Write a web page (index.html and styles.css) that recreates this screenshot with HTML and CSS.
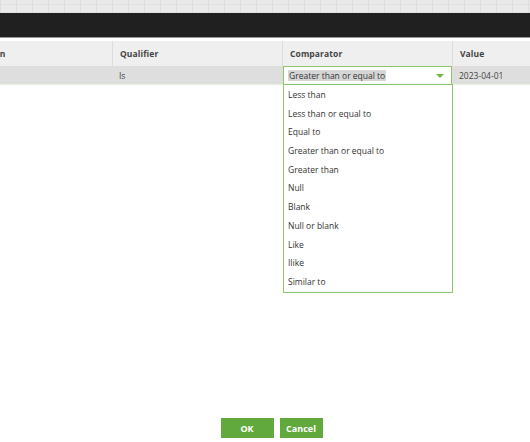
FILE: index.html
```html
<!DOCTYPE html>
<html>
<head>
<meta charset="utf-8">
<link rel="stylesheet" href="styles.css">
</head>
<body>
<div class="page">
  <div class="topstrip"></div>
  <div class="darkbar"></div>
  <div class="content">
    <div class="grid">
      <div class="hcell first">Column</div>
      <div class="hcell">Qualifier</div>
      <div class="hcell">Comparator</div>
      <div class="hcell">Value</div>
      <div class="dcell first"></div>
      <div class="dcell">Is</div>
      <div class="dcell selcell">
        <div class="select">
          <span class="seltext">Greater than or equal to</span>
          <span class="arrow"></span>
        </div>
        <ul class="menu">
          <li>Less than</li>
          <li>Less than or equal to</li>
          <li>Equal to</li>
          <li>Greater than or equal to</li>
          <li>Greater than</li>
          <li>Null</li>
          <li>Blank</li>
          <li>Null or blank</li>
          <li>Like</li>
          <li>Ilike</li>
          <li>Similar to</li>
        </ul>
      </div>
      <div class="dcell">2023-04-01</div>
    </div>
    <div class="spacer"></div>
    <div class="buttons">
      <button class="btn ok">OK</button>
      <button class="btn cancel">Cancel</button>
    </div>
  </div>
</div>
</body>
</html>
```
FILE: styles.css
```css
html, body {
  margin: 0;
  padding: 0;
  background: #ffffff;
}
body {
  font-family: "Open Sans", "DejaVu Sans", sans-serif;
  font-size: 8.5px;
  color: #333;
  width: 530px;
  height: 442px;
  overflow: hidden;
}
.page {
  display: flex;
  flex-direction: column;
  height: 442px;
}
.topstrip {
  height: 13px;
  background-color: #e9e9e9;
  background-image:
    repeating-linear-gradient(90deg, #dddddd 0 1px, transparent 1px 16px),
    repeating-linear-gradient(0deg, #e0e0e0 0 1px, transparent 1px 8px);
}
.darkbar {
  height: 24px;
  background: #202020;
  border-bottom: 1px solid #999;
}
.content {
  flex: 1;
  display: flex;
  flex-direction: column;
  padding-top: 3px;
  background: #fff;
}
.grid {
  display: grid;
  grid-template-columns: 112px 170px 170px 1fr;
  grid-template-rows: 25px 19px;
}
.hcell {
  background: #efefef;
  border-left: 1px solid #dcdcdc;
  font-weight: bold;
  color: #444;
  padding-left: 7px;
  display: flex;
  align-items: center;
  letter-spacing: 0.1px;
}
.hcell.first {
  border-left: none;
  padding-left: 0;
  overflow: hidden;
  white-space: nowrap;
  display: block;
  line-height: 25px;
  text-indent: -28px;
}
.dcell {
  background: #dedede;
  padding-left: 7px;
  display: flex;
  align-items: center;
  color: #444;
  border-bottom: 1px solid #e6f0de;
}
.dcell.first {
  padding: 0;
}
.selcell {
  padding-left: 0;
  position: relative;
  background: #dedede;
}
.select {
  box-sizing: border-box;
  width: 170px;
  height: 19px;
  margin-left: 1px;
  background: #fff;
  border: 1px solid #8cc56a;
  display: flex;
  align-items: center;
  padding-left: 4px;
  position: relative;
}
.seltext {
  background: #d6d6d6;
  color: #333;
  padding: 0 1px;
  line-height: 11px;
}
.arrow {
  position: absolute;
  right: 7px;
  top: 7px;
  width: 0;
  height: 0;
  border-left: 4px solid transparent;
  border-right: 4px solid transparent;
  border-top: 4px solid #72b446;
}
.menu {
  position: absolute;
  left: 1px;
  top: 18px;
  box-sizing: border-box;
  width: 170px;
  margin: 0;
  padding: 1px 0 0;
  list-style: none;
  background: #fff;
  border: 1px solid #8cc56a;
  z-index: 5;
}
.menu li {
  height: 18.7px;
  line-height: 18.7px;
  padding-left: 4px;
  color: #333;
}
.spacer {
  flex: 1;
}
.buttons {
  display: flex;
  justify-content: center;
  gap: 6px;
  padding-bottom: 4px;
  padding-left: 13px;
}
.btn {
  height: 20px;
  border: none;
  background: #62a93d;
  color: #fff;
  font-family: "Open Sans", "DejaVu Sans", sans-serif;
  font-weight: bold;
  font-size: 9px;
  padding: 0;
}
.btn.ok {
  width: 53px;
}
.btn.cancel {
  width: 43px;
}
```
